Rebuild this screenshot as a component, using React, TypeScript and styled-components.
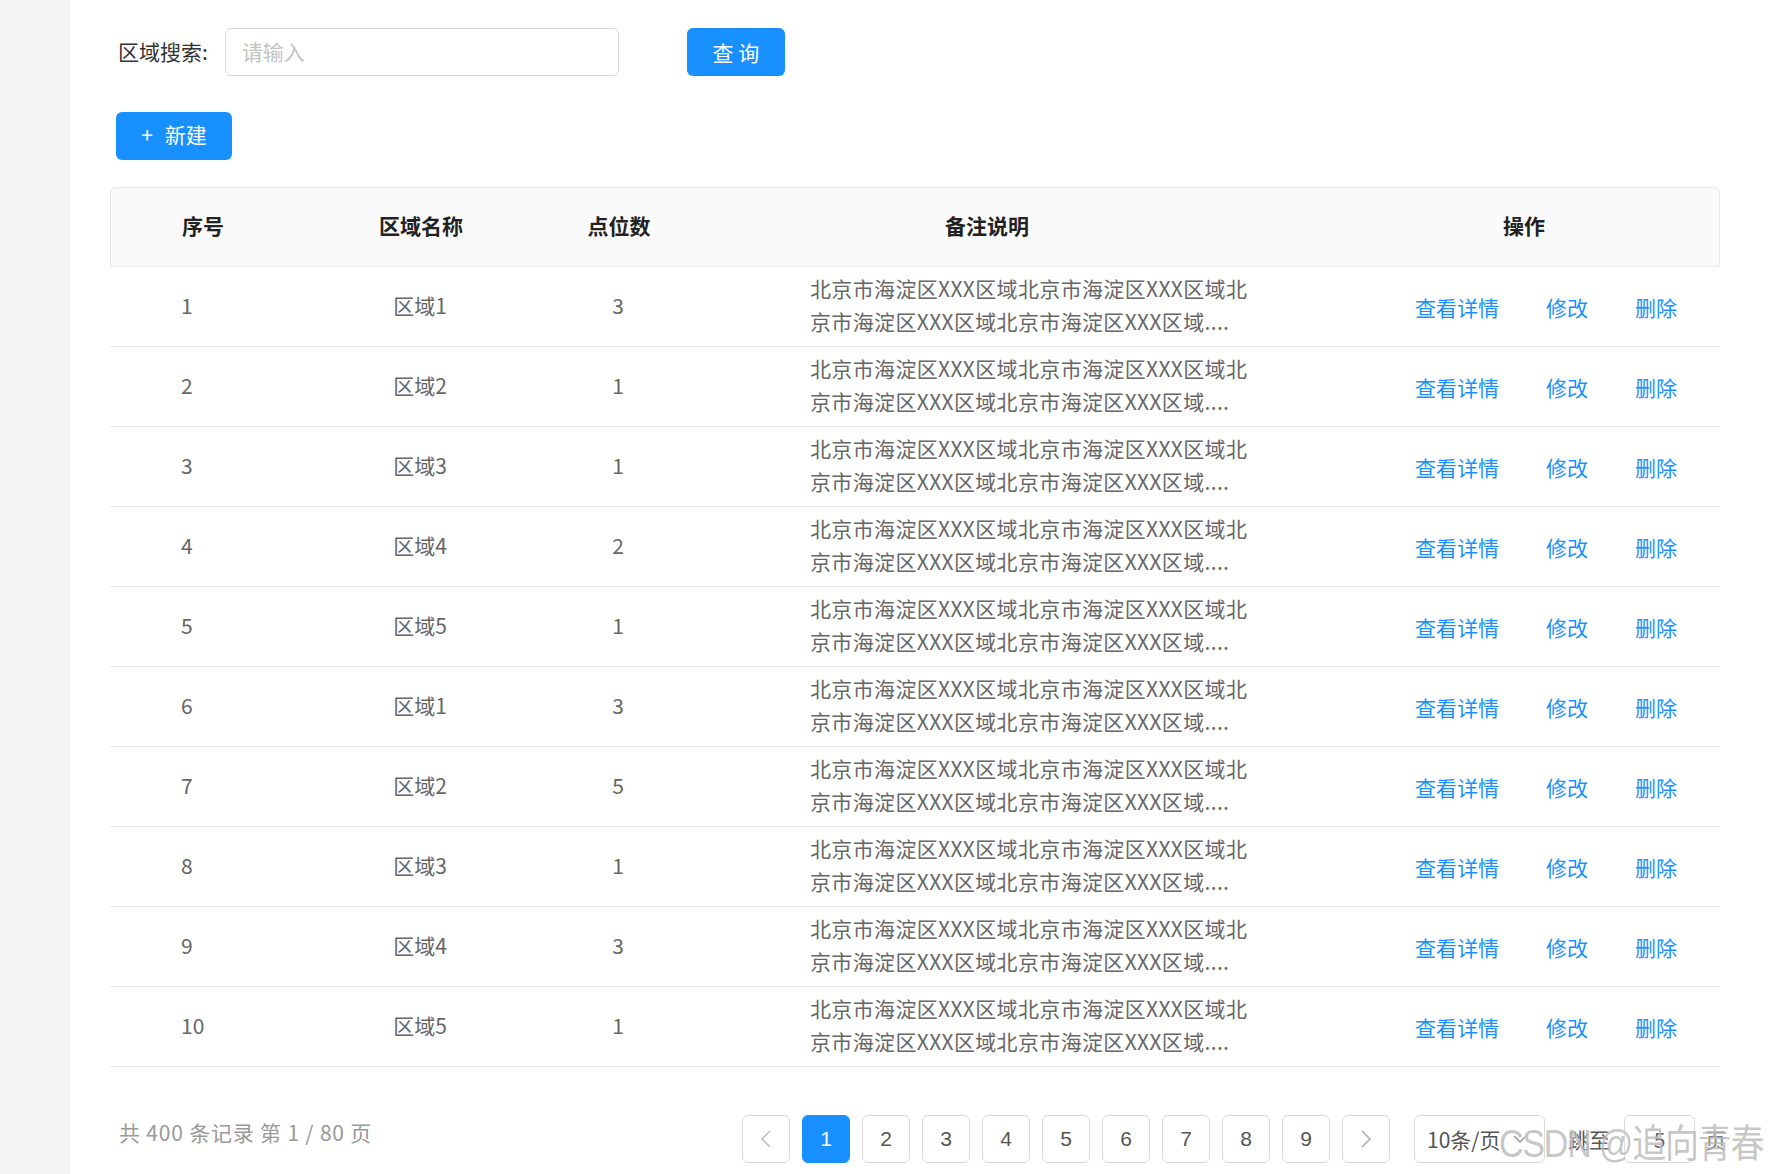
import React from 'react';
import styled, { createGlobalStyle } from 'styled-components';

const GlobalStyle = createGlobalStyle`
  html, body {
    margin: 0;
    padding: 0;
    background: #fff;
    font-family: "Noto Sans CJK SC", "Noto Sans", sans-serif;
  }
  * {
    box-sizing: border-box;
  }
`;

const Page = styled.div`
  display: flex;
  min-height: 1174px;
  position: relative;
  overflow: hidden;
`;

const Sidebar = styled.div`
  width: 70px;
  flex-shrink: 0;
  background-color: #f4f4f4;
`;

const Main = styled.div`
  flex: 1;
  padding: 28px 50px 0 40px;
`;

const SearchBar = styled.div`
  display: flex;
  align-items: center;
  padding-left: 8px;
  height: 48px;
`;

const Label = styled.span`
  font-size: 21px;
  color: #333;
  margin: 0 17px 3px 0;
`;

const SearchInput = styled.input`
  width: 394px;
  height: 48px;
  border: 1px solid #d9d9d9;
  border-radius: 6px;
  padding: 0 16px 3px;
  font-size: 21px;
  font-family: inherit;
  color: #333;
  outline: none;

  &::placeholder {
    color: #c4c4c4;
  }
`;

const PrimaryButton = styled.button<{ $ml?: number; $w: number; $pb?: number }>`
  width: ${p => p.$w}px;
  height: 48px;
  margin-left: ${p => p.$ml ?? 0}px;
  padding: 0 0 ${p => p.$pb ?? 0}px;
  background-color: #1890ff;
  color: #fff;
  border: none;
  border-radius: 6px;
  font-size: 21px;
  font-family: inherit;
  display: flex;
  align-items: center;
  justify-content: center;
  gap: 12px;
  cursor: pointer;
`;

const Toolbar = styled.div`
  margin: 36px 0 27px 6px;
`;

const Table = styled.div`
  width: 1610px;
`;

const cols = '200px 220px 176px 560px 1fr';

const HeadRow = styled.div`
  display: grid;
  grid-template-columns: ${cols};
  height: 80px;
  padding-bottom: 4px;
  background-color: #fafafa;
  border: 1px solid #e8e8e8;
  border-radius: 6px 6px 0 0;
  align-items: center;
`;

const HeadCell = styled.div<{ $align?: string; $pl?: number }>`
  font-size: 21px;
  font-weight: 700;
  color: #222;
  text-align: ${p => p.$align ?? 'center'};
  padding-left: ${p => p.$pl ?? 0}px;
`;

const Row = styled.div`
  display: grid;
  grid-template-columns: ${cols};
  height: 80px;
  border-bottom: 1px solid #e8e8e8;
  align-items: center;
`;

const Cell = styled.div<{ $align?: string; $pl?: number }>`
  font-size: 21px;
  color: #666;
  text-align: ${p => p.$align ?? 'center'};
  padding-left: ${p => p.$pl ?? 0}px;
  padding-bottom: 3px;
`;

const Note = styled.div`
  padding-left: 104px;
  padding-bottom: 4px;
  font-size: 21px;
  line-height: 33px;
  letter-spacing: 0.35px;
  color: #666;
  white-space: nowrap;
`;

const Actions = styled.div`
  display: flex;
  gap: 47px;
  padding-left: 149px;
`;

const ActionLink = styled.a`
  font-size: 21px;
  color: #1890ff;
  cursor: pointer;
`;

const Footer = styled.div`
  display: flex;
  align-items: center;
  margin: 48px -8px 0 9px;
  height: 48px;
`;

const Total = styled.span`
  font-size: 21px;
  color: #999;
  letter-spacing: 0.8px;
  margin-bottom: 15px;
`;

const Pager = styled.div`
  display: flex;
  align-items: center;
  gap: 12px;
  margin-left: auto;
`;

const PageItem = styled.div<{ $active?: boolean }>`
  width: 48px;
  height: 48px;
  border: 1px solid ${p => (p.$active ? '#1890ff' : '#d9d9d9')};
  background-color: ${p => (p.$active ? '#1890ff' : '#fff')};
  color: ${p => (p.$active ? '#fff' : '#555')};
  border-radius: 6px;
  display: flex;
  align-items: center;
  justify-content: center;
  font-size: 21px;
  font-family: "Liberation Sans", Arial, sans-serif;
`;

const SizeSelect = styled.div`
  width: 131px;
  height: 48px;
  margin-left: 12px;
  border: 1px solid #d9d9d9;
  border-radius: 6px;
  display: flex;
  align-items: center;
  justify-content: space-between;
  padding: 0 14px 0 12px;
  font-size: 21px;
  color: #555;
`;

const JumpText = styled.span<{ $ml: number }>`
  font-size: 21px;
  color: #555;
  margin: 0 2px 0 ${p => p.$ml}px;
`;

const JumpInput = styled.div`
  width: 71px;
  height: 48px;
  border: 1px solid #d9d9d9;
  border-radius: 6px;
  display: flex;
  align-items: center;
  justify-content: center;
  font-size: 21px;
  color: #555;
`;

const Watermark = styled.div`
  position: absolute;
  left: 1499px;
  top: 1112px;
  font-size: 34px;
  color: rgba(150, 150, 150, 0.55);
  font-family: "Liberation Sans", "Noto Sans CJK SC", sans-serif;
  letter-spacing: -1.2px;
  transform: scaleY(1.15);
  transform-origin: left top;
  text-shadow: 0 0 2px rgba(255, 255, 255, 0.8);
  white-space: nowrap;
  pointer-events: none;
`;

const Chevron = ({ dir, color = '#bbb' }: { dir: 'left' | 'right' | 'down'; color?: string }) => {
  const points =
    dir === 'left' ? '14,4 6,12 14,20' : dir === 'right' ? '6,4 14,12 6,20' : '4,7 10,13 16,7';
  return (
    <svg width={20} height={dir === 'down' ? 20 : 24} viewBox={dir === 'down' ? '0 0 20 20' : '0 0 20 24'}>
      <polyline points={points} fill="none" stroke={color} strokeWidth={1.5} />
    </svg>
  );
};

const rows = [
  { id: 1, name: '区域1', count: 3 },
  { id: 2, name: '区域2', count: 1 },
  { id: 3, name: '区域3', count: 1 },
  { id: 4, name: '区域4', count: 2 },
  { id: 5, name: '区域5', count: 1 },
  { id: 6, name: '区域1', count: 3 },
  { id: 7, name: '区域2', count: 5 },
  { id: 8, name: '区域3', count: 1 },
  { id: 9, name: '区域4', count: 3 },
  { id: 10, name: '区域5', count: 1 },
];

const App: React.FC = () => {
  return (
    <Page>
      <GlobalStyle />
      <Sidebar />
      <Main>
        <SearchBar>
          <Label>区域搜索:</Label>
          <SearchInput placeholder="请输入" />
          <PrimaryButton $ml={68} $w={98}>
            查 询
          </PrimaryButton>
        </SearchBar>

        <Toolbar>
          <PrimaryButton $w={116} $pb={4}>
            <span>+</span>
            <span>新建</span>
          </PrimaryButton>
        </Toolbar>

        <Table>
          <HeadRow>
            <HeadCell $align="left" $pl={71}>序号</HeadCell>
            <HeadCell>区域名称</HeadCell>
            <HeadCell>点位数</HeadCell>
            <HeadCell>备注说明</HeadCell>
            <HeadCell $align="left" $pl={236}>操作</HeadCell>
          </HeadRow>
          {rows.map(r => (
            <Row key={r.id}>
              <Cell $align="left" $pl={71}>{r.id}</Cell>
              <Cell>{r.name}</Cell>
              <Cell>{r.count}</Cell>
              <Note>
                <div>北京市海淀区XXX区域北京市海淀区XXX区域北</div>
                <div>京市海淀区XXX区域北京市海淀区XXX区域....</div>
              </Note>
              <Actions>
                <ActionLink>查看详情</ActionLink>
                <ActionLink>修改</ActionLink>
                <ActionLink>删除</ActionLink>
              </Actions>
            </Row>
          ))}
        </Table>

        <Footer>
          <Total>共 400 条记录 第 1 / 80 页</Total>
          <Pager>
            <PageItem>
              <Chevron dir="left" />
            </PageItem>
            {[1, 2, 3, 4, 5, 6, 7, 8, 9].map(n => (
              <PageItem key={n} $active={n === 1}>
                {n}
              </PageItem>
            ))}
            <PageItem>
              <Chevron dir="right" color="#aaa" />
            </PageItem>
            <SizeSelect>
              <span>10条/页</span>
              <Chevron dir="down" color="#999" />
            </SizeSelect>
            <JumpText $ml={11}>跳至</JumpText>
            <JumpInput>5</JumpInput>
            <JumpText $ml={-2}>页</JumpText>
          </Pager>
        </Footer>
      </Main>
      <Watermark>CSDN @追向青春</Watermark>
    </Page>
  );
};

export default App;
